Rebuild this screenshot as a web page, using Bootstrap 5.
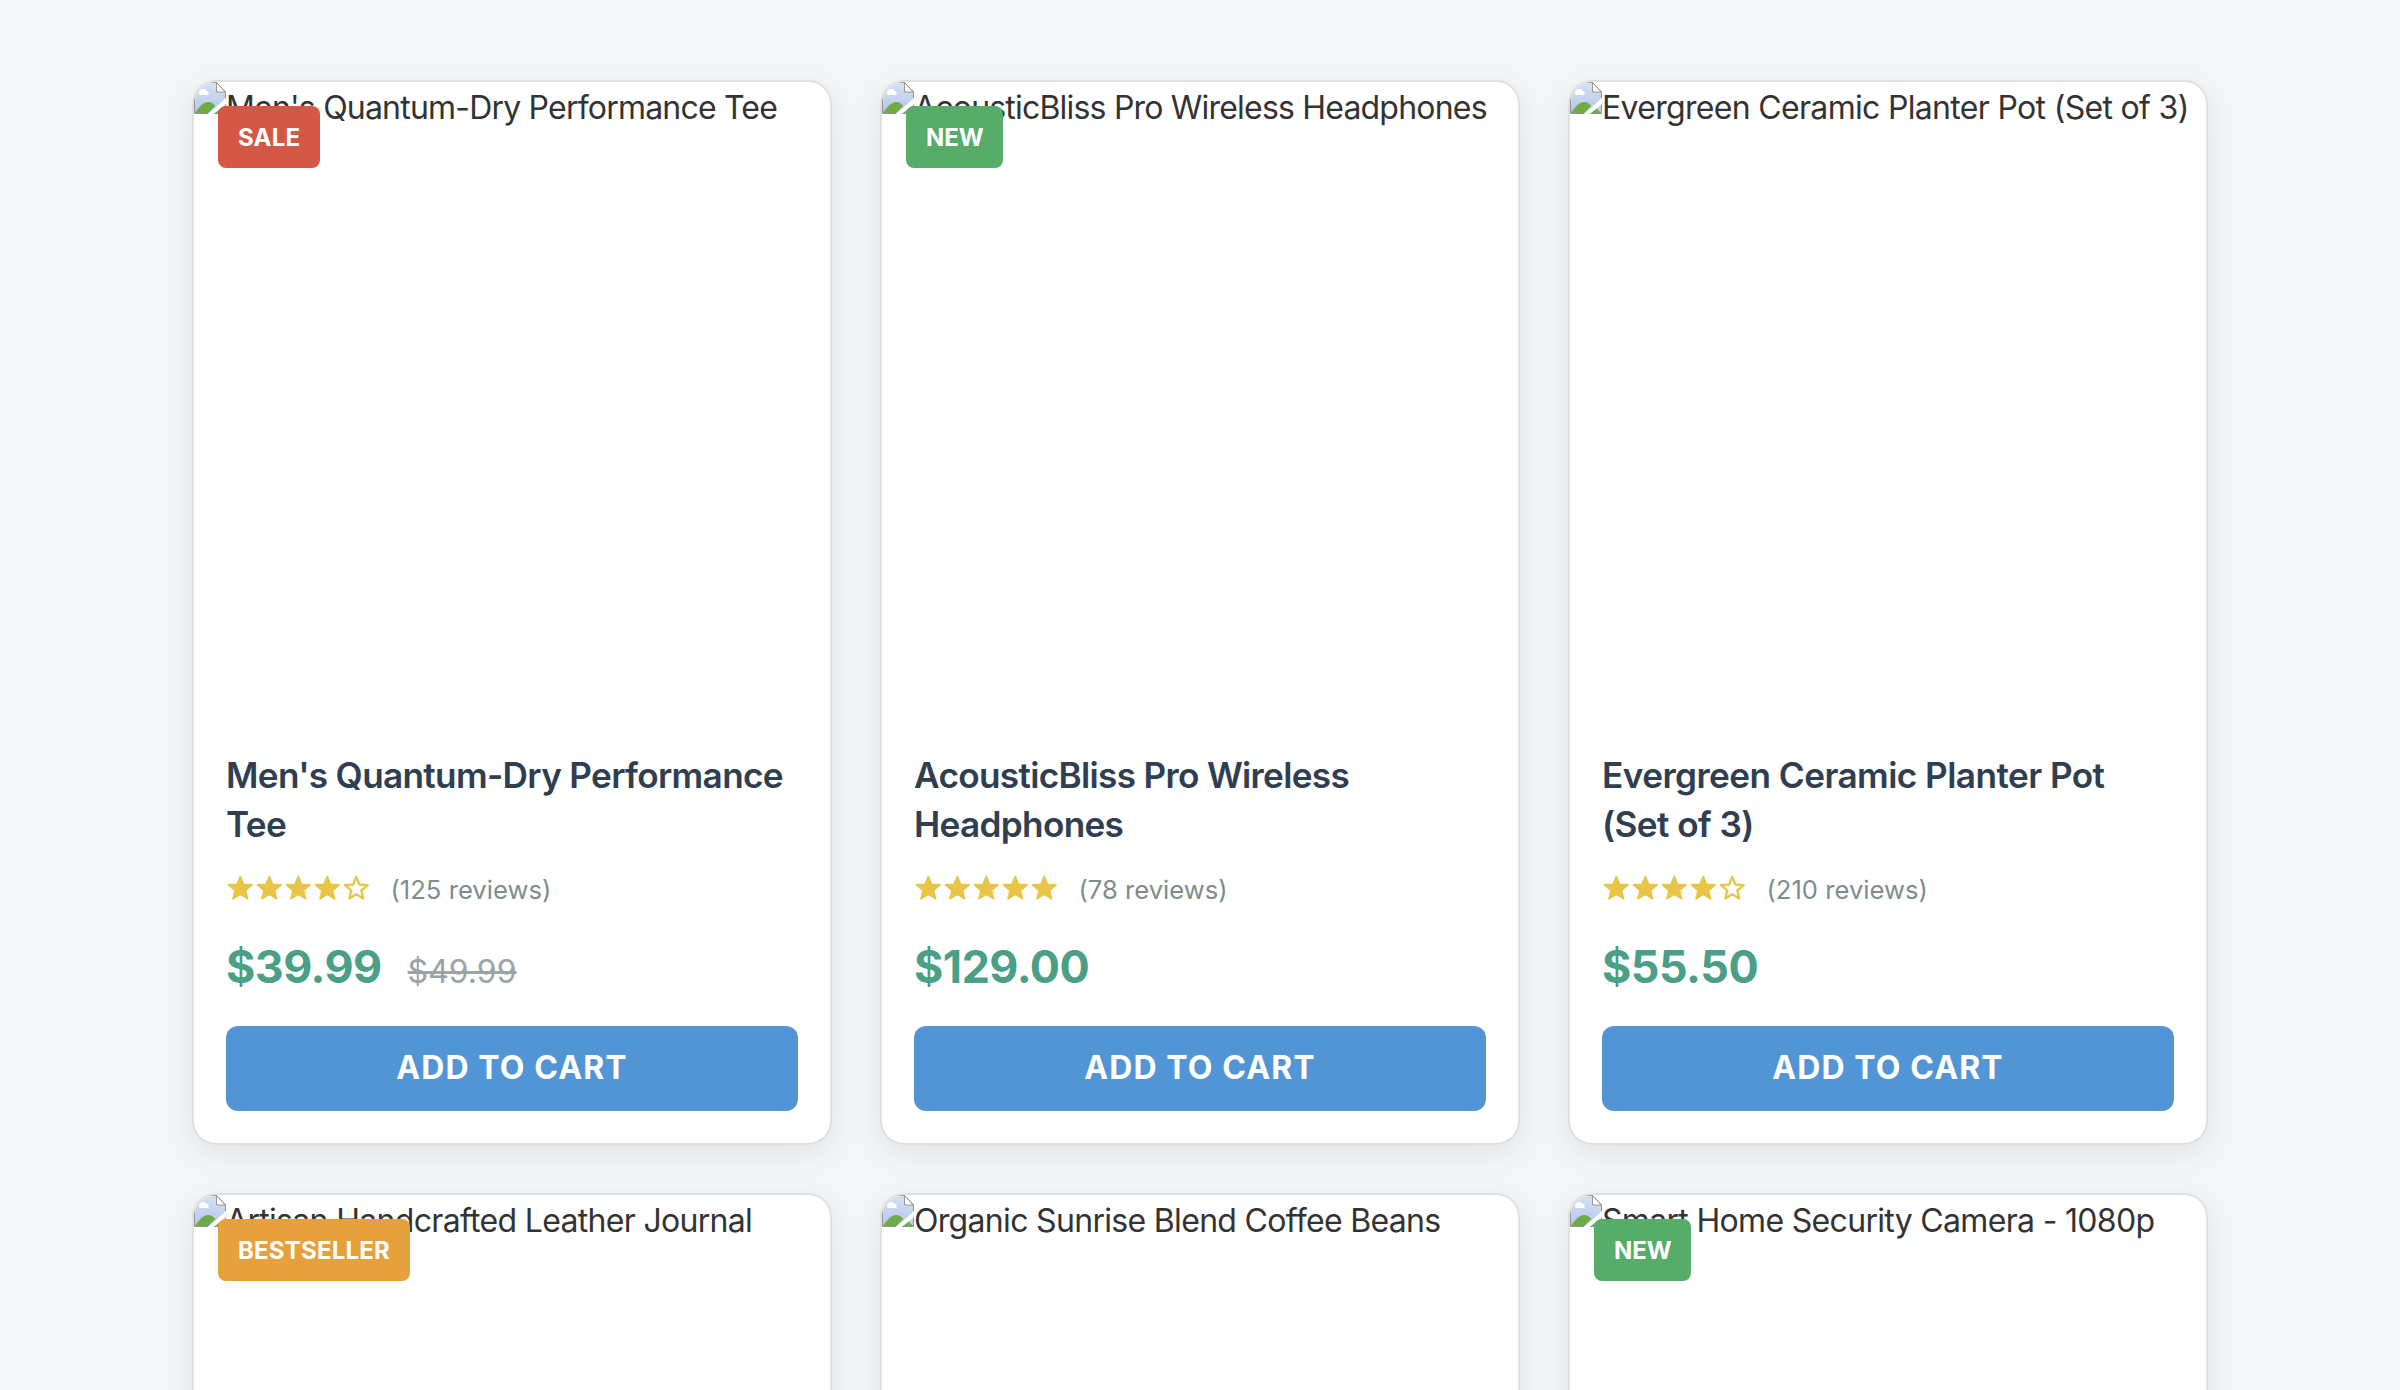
<!DOCTYPE html>
<html lang="en">
<head>
<meta charset="utf-8">
<meta name="viewport" content="width=device-width, initial-scale=1">
<title>Products</title>
<link href="https://cdn.jsdelivr.net/npm/bootstrap@5.3.0/dist/css/bootstrap.min.css" rel="stylesheet">
<style>
body{background:#f4f6f8;color:#333;font-family:Inter,"Liberation Sans",sans-serif;font-size:32px;line-height:1.6}
.shop{max-width:2064px;padding-top:32px}
.shop .row{--bs-gutter-x:48px}
.shop .col-4{margin-top:48px}
.product{--bs-card-border-width:2px;--bs-card-border-color:#e0e0e0;--bs-card-border-radius:24px;--bs-card-inner-border-radius:22px;color:#333;box-shadow:0 8px 32px rgba(0,0,0,.085);overflow:hidden}
.media{height:636px;white-space:nowrap;letter-spacing:-.8px}
.col-4:nth-child(n+3) .media{letter-spacing:-.68px}
.media svg{width:32px;height:32px;flex:none}
.media .alt{line-height:52px}
.tag{top:24px;left:24px;padding:13px 20px 11px;border-radius:8px;font-size:24px;font-weight:700;line-height:38.4px;color:#fff;letter-spacing:.2px}
.tag-sale{background:#d55745}.tag-new{background:#57ac69;letter-spacing:-.1px}.tag-best{background:#e6a03c}
.product .card-body{padding:32px}
.product h2{font-size:35.2px;line-height:1.4;font-weight:600;color:#2f3e50;letter-spacing:-.69px;margin:0 0 15px;padding-top:1px}
.col-4:nth-child(3) h2{letter-spacing:-.57px}
.rating{height:46px;color:#e8c547}
.rating svg{width:28.9px;height:28.8px}
.reviews{font-size:25.6px;line-height:1.6;color:#7f8c8d;margin-left:20px;padding-top:5px;letter-spacing:.02px}
.price{margin:21px 0 23px;height:71.7px;line-height:71.7px;font-size:44.8px;font-weight:700;color:#4a9f86;letter-spacing:-.5px}
.price del{font-size:32px;font-weight:400;color:#98a4a5;margin-left:26px;letter-spacing:0}
.btn-cart{--bs-btn-bg:#5195d5;--bs-btn-color:#fff;--bs-btn-hover-bg:#4484c4;--bs-btn-hover-color:#fff;--bs-btn-border-width:0;--bs-btn-border-radius:12px;--bs-btn-font-size:32px;--bs-btn-font-weight:700;--bs-btn-padding-y:0;height:84.6px;padding-bottom:2px;letter-spacing:1.1px}
</style>
</head>
<body class="vh-100 overflow-hidden">
<svg width="0" height="0" class="position-absolute"><defs>
<linearGradient id="sky" x1="0" y1="0" x2="0" y2="1"><stop offset="0" stop-color="#d5e1f7"/><stop offset="1" stop-color="#b5c6ea"/></linearGradient>
<symbol id="star" viewBox="0 0 28.9 28.8"><path transform="translate(14.3 15.8)" d="M0-12.5 3.3-4.5 11.9-3.9 5.3 1.7 7.35 10.1 0 5.6-7.35 10.1-5.3 1.7-11.9-3.9-3.3-4.5Z" fill="currentColor" stroke="currentColor" stroke-width="1.6" stroke-linejoin="round"/></symbol>
<symbol id="star-o" viewBox="0 0 28.9 28.8"><path transform="translate(14.3 15.8)" d="M0-11.9 3.1-4.3 11.4-3.7 5 1.7 7 9.7 0 5.4-7 9.7-5 1.7-11.4-3.7-3.1-4.3Z" fill="none" stroke="currentColor" stroke-width="2.300" stroke-linejoin="round"/></symbol>
<symbol id="broken" viewBox="0 0 32 32">
<path d="M0 0H22V10H32V16L14 32H0Z" fill="url(#sky)"/>
<path d="M32 22V32H20Z" fill="#c4d2ee"/>
<path d="M1 31C5 25 9 20 14 20 17 20 19 21.5 21.5 24L14 31ZM21 31 27 26.500 31 31Z" fill="#6fac47"/>
<path d="M6 13A3 3 0 0 1 6 8.500 4 4 0 0 1 13 9 2.300 2.300 0 0 1 14 13Z" fill="#fff"/>
<path d="M22.500 .5V10H31.500Z" fill="#fff" stroke="#999" stroke-width="1"/>
<path d="M14 31.500H.5V.5H22.500L31.500 10V16M31.500 22.500V31.500H20" fill="none" stroke="#929292" stroke-width="1"/>
</symbol></defs></svg>

<main class="container-fluid shop px-4">
<div class="row">
  <div class="col-4"><article class="card product">
    <div class="media d-flex"><svg><use href="#broken"/></svg><span class="alt">Men's Quantum-Dry Performance Tee</span></div>
    <span class="tag tag-sale position-absolute">SALE</span>
    <div class="card-body">
      <h2>Men's Quantum-Dry Performance Tee</h2>
      <div class="rating d-flex align-items-center"><svg><use href="#star"/></svg><svg><use href="#star"/></svg><svg><use href="#star"/></svg><svg><use href="#star"/></svg><svg><use href="#star-o"/></svg><span class="reviews">(125 reviews)</span></div>
      <div class="price">$39.99<del>$49.99</del></div>
      <button class="btn btn-cart w-100 d-block" type="button">ADD TO CART</button>
    </div></article></div>
  <div class="col-4"><article class="card product">
    <div class="media d-flex"><svg><use href="#broken"/></svg><span class="alt">AcousticBliss Pro Wireless Headphones</span></div>
    <span class="tag tag-new position-absolute">NEW</span>
    <div class="card-body">
      <h2>AcousticBliss Pro Wireless Headphones</h2>
      <div class="rating d-flex align-items-center"><svg><use href="#star"/></svg><svg><use href="#star"/></svg><svg><use href="#star"/></svg><svg><use href="#star"/></svg><svg><use href="#star"/></svg><span class="reviews">(78 reviews)</span></div>
      <div class="price">$129.00</div>
      <button class="btn btn-cart w-100 d-block" type="button">ADD TO CART</button>
    </div></article></div>
  <div class="col-4"><article class="card product">
    <div class="media d-flex"><svg><use href="#broken"/></svg><span class="alt">Evergreen Ceramic Planter Pot (Set of 3)</span></div>
    <div class="card-body">
      <h2>Evergreen Ceramic Planter Pot (Set of 3)</h2>
      <div class="rating d-flex align-items-center"><svg><use href="#star"/></svg><svg><use href="#star"/></svg><svg><use href="#star"/></svg><svg><use href="#star"/></svg><svg><use href="#star-o"/></svg><span class="reviews">(210 reviews)</span></div>
      <div class="price">$55.50</div>
      <button class="btn btn-cart w-100 d-block" type="button">ADD TO CART</button>
    </div></article></div>
  <div class="col-4"><article class="card product">
    <div class="media d-flex"><svg><use href="#broken"/></svg><span class="alt">Artisan Handcrafted Leather Journal</span></div>
    <span class="tag tag-best position-absolute">BESTSELLER</span>
  </article></div>
  <div class="col-4"><article class="card product">
    <div class="media d-flex"><svg><use href="#broken"/></svg><span class="alt">Organic Sunrise Blend Coffee Beans</span></div>
  </article></div>
  <div class="col-4"><article class="card product">
    <div class="media d-flex"><svg><use href="#broken"/></svg><span class="alt">Smart Home Security Camera - 1080p</span></div>
    <span class="tag tag-new position-absolute">NEW</span>
  </article></div>
</div>
</main>
<script src="https://cdn.jsdelivr.net/npm/bootstrap@5.3.0/dist/js/bootstrap.bundle.min.js"></script>
</body>
</html>
